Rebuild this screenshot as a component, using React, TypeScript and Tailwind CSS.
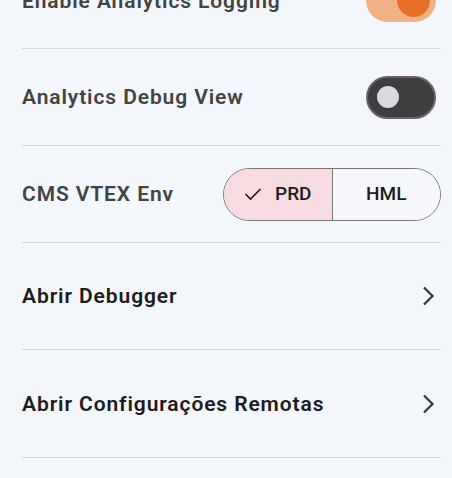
import { useState } from "react";

function Toggle({ on }: { on: boolean }) {
  return on ? (
    <div className="mr-[5px] flex h-[43px] w-[70px] shrink-0 items-center justify-end rounded-full bg-[#f0b184] pr-[6px]">
      <div className="h-[33px] w-[33px] rounded-full bg-[#e86f28]" />
    </div>
  ) : (
    <div className="mr-[5px] flex h-[43px] w-[70px] shrink-0 items-center rounded-full border-[2.5px] border-[#6f6168] bg-[#3e3e41] pl-[9px]">
      <div className="h-[22px] w-[22px] rounded-full bg-[#d8dce1]" />
    </div>
  );
}

function Chevron() {
  return (
    <svg width="14" height="20" viewBox="0 0 14 20" className="mr-[5px]">
      <path d="M2 1.5 L10.5 10 L2 18.5" fill="none" stroke="#3d3a40" strokeWidth="2.3" />
    </svg>
  );
}

const label = "pt-[2px] text-[21px] font-semibold tracking-[0.9px]";

export default function App() {
  const [env, setEnv] = useState("PRD");

  return (
    <div className="min-h-[478px] overflow-hidden bg-[#f3f6fa] font-['Roboto',sans-serif]">
      <div className="-mt-[47px] pl-[22px] pr-[11px]">
        <div className="flex h-[96px] items-center justify-between border-b border-[#dcd7db]">
          <span className={`${label} text-[#434343]`}>Enable Analytics Logging</span>
          <Toggle on />
        </div>
        <div className="flex h-[97px] items-center justify-between border-b border-[#dcd7db]">
          <span className={`${label} text-[#434343]`}>Analytics Debug View</span>
          <Toggle on={false} />
        </div>
        <div className="flex h-[97px] items-center justify-between border-b border-[#dcd7db]">
          <span className={`${label} text-[#434343]`}>CMS VTEX Env</span>
          <div className="flex h-[53px] w-[218px] overflow-hidden rounded-full border-[1.5px] border-[#7b7479]">
            <button
              onClick={() => setEnv("PRD")}
              className={`flex flex-1 items-center justify-center gap-[13px] border-r-[1.5px] border-[#7b7479] text-[19px] font-medium text-[#1d1b20] ${env === "PRD" ? "bg-[#f8dae1]" : "bg-[#f5f7fa]"}`}
            >
              {env === "PRD" && (
                <svg width="18" height="14" viewBox="0 0 18 14">
                  <path d="M1.5 7 L6.5 12 L16.5 2" fill="none" stroke="#1d1b20" strokeWidth="1.6" />
                </svg>
              )}
              PRD
            </button>
            <button
              onClick={() => setEnv("HML")}
              className={`flex flex-1 items-center justify-center gap-[13px] text-[19px] font-medium text-[#1d1b20] ${env === "HML" ? "bg-[#f8dae1]" : "bg-[#f5f7fa]"}`}
            >
              HML
            </button>
          </div>
        </div>
        <div className="flex h-[107px] items-center justify-between border-b border-[#dcd7db]">
          <span className={`${label} text-[#1d1b20]`}>Abrir Debugger</span>
          <Chevron />
        </div>
        <div className="flex h-[108px] items-center justify-between border-b border-[#dcd7db]">
          <span className={`${label} text-[#1d1b20]`}>Abrir Configurações Remotas</span>
          <Chevron />
        </div>
      </div>
    </div>
  );
}
